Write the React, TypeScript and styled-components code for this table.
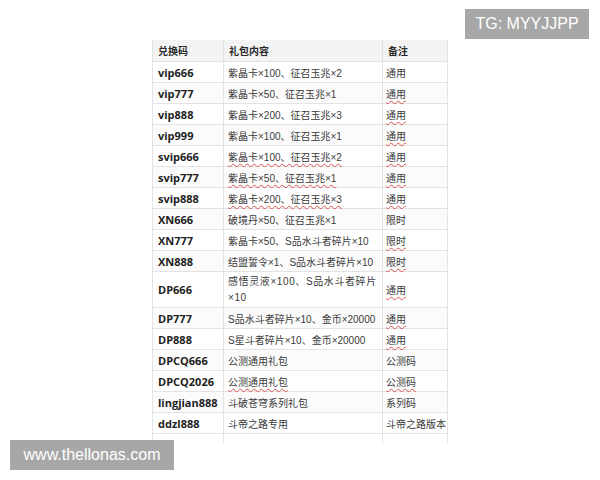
import React from "react";
import styled, { createGlobalStyle } from "styled-components";

type Row = {
  code: string;
  content: React.ReactNode;
  note: string;
  wavyContent?: boolean;
  wavyNote?: boolean;
  tall?: boolean;
};

const rows: Row[] = [
  { code: "vip666", content: "紫晶卡×100、征召玉兆×2", note: "通用" },
  { code: "vip777", content: "紫晶卡×50、征召玉兆×1", note: "通用", wavyNote: true },
  { code: "vip888", content: "紫晶卡×200、征召玉兆×3", note: "通用", wavyNote: true },
  { code: "vip999", content: "紫晶卡×100、征召玉兆×1", note: "通用", wavyNote: true },
  { code: "svip666", content: "紫晶卡×100、征召玉兆×2", note: "通用", wavyContent: true, wavyNote: true },
  { code: "svip777", content: "紫晶卡×50、征召玉兆×1", note: "通用", wavyContent: true, wavyNote: true },
  { code: "svip888", content: "紫晶卡×200、征召玉兆×3", note: "通用", wavyContent: true, wavyNote: true },
  { code: "XN666", content: "破境丹×50、征召玉兆×1", note: "限时" },
  { code: "XN777", content: "紫晶卡×50、S品水斗者碎片×10", note: "限时", wavyNote: true },
  { code: "XN888", content: "结盟誓令×1、S品水斗者碎片×10", note: "限时", wavyNote: true },
  {
    code: "DP666",
    content: (
      <>
        感悟灵液×100、S品水斗者碎片
        <br />
        ×10
      </>
    ),
    note: "通用",
    wavyNote: true,
    tall: true,
  },
  { code: "DP777", content: "S品水斗者碎片×10、金币×20000", note: "通用", wavyNote: true },
  { code: "DP888", content: "S星斗者碎片×10、金币×20000", note: "通用", wavyNote: true },
  { code: "DPCQ666", content: "公测通用礼包", note: "公测码" },
  { code: "DPCQ2026", content: "公测通用礼包", note: "公测码", wavyContent: true, wavyNote: true },
  { code: "lingjian888", content: "斗破苍穹系列礼包", note: "系列码" },
  { code: "ddzl888", content: "斗帝之路专用", note: "斗帝之路版本" },
];

function App() {
  return (
    <>
      <GlobalStyle />
      <Page>
        <Table>
          <colgroup>
            <col style={{ width: 71 }} />
            <col style={{ width: 159 }} />
            <col style={{ width: 65 }} />
          </colgroup>
          <thead>
            <tr>
              <HeadCell>兑换码</HeadCell>
              <HeadCell>礼包内容</HeadCell>
              <HeadCell>备注</HeadCell>
            </tr>
          </thead>
          <tbody>
            {rows.map((r, i) => (
              <BodyRow key={r.code} $tall={r.tall} $odd={i % 2 === 1}>
                <CodeCell>{r.code}</CodeCell>
                <TextCell $spaced={r.tall}>
                  <Mark $wavy={r.wavyContent}>{r.content}</Mark>
                </TextCell>
                <NoteCell>
                  <Mark $wavy={r.wavyNote}>{r.note}</Mark>
                </NoteCell>
              </BodyRow>
            ))}
            <CutRow>
              <td />
              <td />
              <td />
            </CutRow>
          </tbody>
        </Table>
        <TopTag>TG: MYYJJPP</TopTag>
        <BottomTag>www.thellonas.com</BottomTag>
      </Page>
    </>
  );
}

export default App;

const GlobalStyle = createGlobalStyle`
  html, body {
    margin: 0;
    padding: 0;
    background: #ffffff;
  }
  body {
    font-family: "Liberation Sans", "Noto Sans CJK SC", sans-serif;
  }
`;

const Page = styled.div`
  position: relative;
  width: 600px;
  height: 480px;
  overflow: hidden;
  padding: 40px 0 0 152px;
  box-sizing: border-box;
`;

const Table = styled.table`
  border-collapse: collapse;
  table-layout: fixed;
  width: 296px;
  font-family: "Liberation Sans", "Noto Sans CJK SC", sans-serif;
  font-size: 10px;
  color: #3a3a3a;

  td,
  th {
    border: 1px solid #e3e3e3;
  }
`;

const HeadCell = styled.th`
  height: 21px;
  padding: 0 5px;
  background: #f3f3f3;
  text-align: left;
  font-weight: 700;
  font-size: 10px;
  color: #2a2a2a;
  border-top: none !important;
`;

const BodyRow = styled.tr<{ $tall?: boolean; $odd?: boolean }>`
  height: ${(p) => (p.$tall ? "36px" : "21px")};
  background: ${(p) => (p.$odd ? "#fbfbfb" : "#ffffff")};
`;

const CodeCell = styled.td`
  padding: 0 5px;
  font-family: "Open Sans", "Noto Sans", sans-serif;
  font-weight: 700;
  font-size: 11px;
  color: #1e1e1e;
  white-space: nowrap;
`;

const TextCell = styled.td<{ $spaced?: boolean }>`
  padding: 0 4px;
  white-space: nowrap;
  letter-spacing: ${(p) => (p.$spaced ? "0.6px" : "0")};
  line-height: ${(p) => (p.$spaced ? "16px" : "normal")};
`;

const NoteCell = styled.td`
  padding: 0 2px 0 3px;
  white-space: nowrap;
`;

const Mark = styled.span<{ $wavy?: boolean }>`
  text-decoration: ${(p) => (p.$wavy ? "underline wavy #d9534f" : "none")};
  text-decoration-thickness: 1px;
  text-underline-offset: 2px;
`;

const CutRow = styled.tr`
  height: 9px;

  td {
    border-bottom: none;
  }
`;

const Tag = styled.div`
  position: absolute;
  background: #a7a7a7;
  color: #ffffff;
  font-family: "Liberation Sans", Arial, sans-serif;
  font-size: 16px;
  height: 30px;
  line-height: 30px;
  text-align: center;
`;

const TopTag = styled(Tag)`
  top: 9px;
  left: 465px;
  width: 124px;
`;

const BottomTag = styled(Tag)`
  top: 440px;
  left: 10px;
  width: 164px;
`;
